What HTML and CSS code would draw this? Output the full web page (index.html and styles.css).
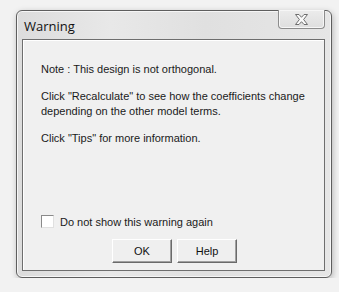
FILE: index.html
```html
<!DOCTYPE html>
<html lang="en">
<head>
    <meta charset="UTF-8">
    <title>Warning</title>
    <link rel="stylesheet" href="styles.css">
</head>
<body>
    <div class="window">
        <div class="titlebar">
            <span class="title">Warning</span>
            <div class="close-btn">
                <svg width="15" height="11" viewBox="0 0 15 11">
                    <path d="M1.5 0.5 H5 L7.5 3.3 L10 0.5 H13.5 L9.6 5.5 L13.5 10.5 H10 L7.5 7.7 L5 10.5 H1.5 L5.4 5.5 Z" fill="#fafafa" stroke="#6e6e6e" stroke-width="1"/>
                </svg>
            </div>
        </div>
        <div class="panel">
            <div class="message">
                <p>Note : This design is not orthogonal.</p>
                <p>Click "Recalculate" to see how the coefficients change<br>depending on the other model terms.</p>
                <p>Click "Tips" for more information.</p>
            </div>
            <label class="check-row">
                <span class="checkbox"></span>
                <span>Do not show this warning again</span>
            </label>
            <div class="buttons">
                <button class="btn">OK</button>
                <button class="btn">Help</button>
            </div>
        </div>
    </div>
</body>
</html>
```

FILE: styles.css
```css
* {
    margin: 0;
    padding: 0;
    box-sizing: border-box;
}

body {
    background: #f2f2f2;
    font-family: 'Liberation Sans', Arial, sans-serif;
    color: #1a1a1a;
    padding: 10px 0 0 16px;
}

.window {
    width: 316px;
    height: 268px;
    border: 1px solid #5e5e5e;
    border-radius: 6px;
    background: linear-gradient(90deg, #dcdcdc 0%, #e8e8e8 30%, #e0e0e0 60%, #e6e6e6 100%);
    box-shadow: 1px 2px 6px rgba(0, 0, 0, 0.25), inset 0 0 0 1px #f6f6f6;
    display: flex;
    flex-direction: column;
    padding: 0 6px 6px 5px;
}

.titlebar {
    height: 28px;
    display: flex;
    align-items: flex-start;
    justify-content: space-between;
}

.title {
    font-family: 'Open Sans', 'Liberation Sans', sans-serif;
    font-size: 13px;
    color: #111;
    margin: 6px 0 0 2px;
}

.close-btn {
    width: 47px;
    height: 19px;
    margin-top: -1px;
    border: 1px solid #8c8c8c;
    border-top: none;
    border-radius: 0 0 4px 4px;
    background: linear-gradient(#ececec, #dedede);
    box-shadow: inset 0 0 0 1px #f6f6f6;
    display: flex;
    align-items: center;
    justify-content: center;
}

.panel {
    flex: 1;
    background: #f0f0f0;
    border: 1px solid #6e6e6e;
    box-shadow: inset 1px 1px 0 #ffffff;
    padding: 22px 0 0 18px;
    display: flex;
    flex-direction: column;
    font-size: 11px;
    white-space: nowrap;
}

.message p {
    line-height: 15px;
    margin-bottom: 12px;
}

.check-row {
    display: flex;
    align-items: center;
    gap: 6px;
    margin-top: 57px;
}

.checkbox {
    width: 13px;
    height: 13px;
    background: #fff;
    border: 1px solid #8a8a8a;
    border-right-color: #e0e0e0;
    border-bottom-color: #e0e0e0;
}

.buttons {
    display: flex;
    gap: 5px;
    margin: 11px 0 0 71px;
}

.btn {
    width: 60px;
    height: 24px;
    font-family: 'Liberation Sans', Arial, sans-serif;
    font-size: 11px;
    color: #111;
    background: #efefef;
    border: 1px solid;
    border-color: #ffffff #6a6a6a #6a6a6a #ffffff;
    box-shadow: inset -1px -1px 0 #a0a0a0;
}
```
